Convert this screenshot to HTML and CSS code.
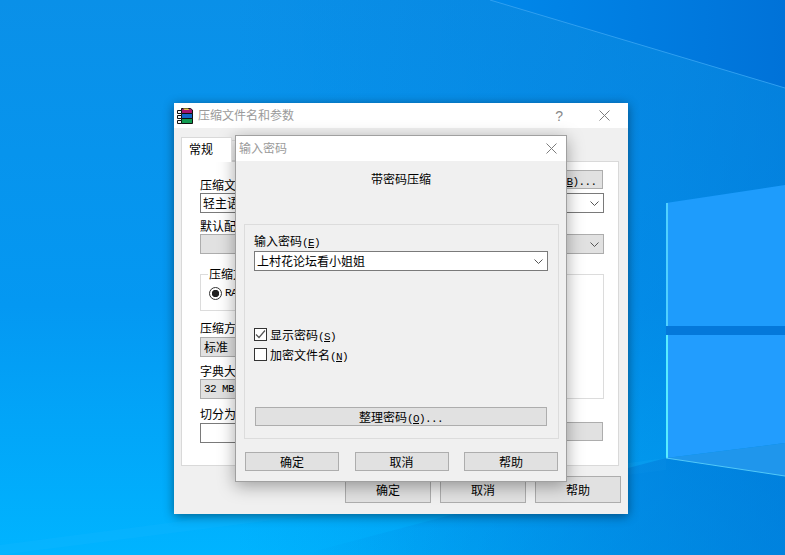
FILE: index.html
```html
<!DOCTYPE html>
<html lang="zh-CN">
<head>
  <meta charset="UTF-8">
  <title>压缩文件名和参数</title>
  <link rel="stylesheet" href="styles.css">
</head>
<body>
  <svg width="0" height="0" class="defs">
    <symbol id="close" viewBox="0 0 11 11"><path d="M.5.5l10 10M10.5.5l-10 10" fill="none" stroke="currentColor"/></symbol>
    <symbol id="chevron" viewBox="0 0 9 5"><path d="M.5.5l4 4 4-4" fill="none" stroke="#555"/></symbol>
  </svg>

  <div class="desktop">
    <!-- wallpaper -->
    <svg class="wallpaper" width="785" height="555" viewBox="0 0 785 555">
      <defs>
        <linearGradient id="base" x1="0" y1="0" x2="0" y2="1">
          <stop offset="0" stop-color="#0a90e8"/>
          <stop offset="0.55" stop-color="#0498f2"/>
          <stop offset="1" stop-color="#00b4ff"/>
        </linearGradient>
        <linearGradient id="shade" x1="0" y1="0" x2="1" y2="0">
          <stop offset="0.3" stop-color="#0070d0" stop-opacity="0"/>
          <stop offset="0.85" stop-color="#0070d0" stop-opacity="0.35"/>
          <stop offset="1" stop-color="#0070d0" stop-opacity="0.5"/>
        </linearGradient>
        <linearGradient id="sky" x1="0" y1="0" x2="1" y2="0">
          <stop offset="0" stop-color="#0088ea"/>
          <stop offset="1" stop-color="#0072d8"/>
        </linearGradient>
        <linearGradient id="floor" x1="0" y1="0" x2="1" y2="0">
          <stop offset="0" stop-color="#0078d8" stop-opacity="0"/>
          <stop offset="0.75" stop-color="#0078d8" stop-opacity="0.5"/>
          <stop offset="1" stop-color="#0078d8" stop-opacity="0.6"/>
        </linearGradient>
      </defs>
      <rect width="785" height="555" fill="url(#base)"/>
      <rect width="785" height="555" fill="url(#shade)"/>
      <polygon points="490,0 785,88 785,0" fill="url(#sky)"/>
      <line x1="490" y1="0" x2="785" y2="88" stroke="#2f9ff0"/>
      <polygon points="0,545 666,458 666,470 0,555" fill="#30c0ff" opacity="0.12"/>
      <polygon points="300,555 666,458 785,476 785,555" fill="url(#floor)"/>
      <polygon points="666,203 785,185 785,326 666,326" fill="#1e9cfc"/>
      <polygon points="666,335 785,335 785,443 666,458" fill="#229dfe"/>
      <polygon points="666,458 785,443 785,476" fill="#1f96ec"/>
      <rect x="666" y="326" width="119" height="9" fill="#0478da"/>
      <rect x="666" y="203" width="2" height="123" fill="#4fd0ff"/>
      <rect x="666" y="335" width="2" height="123" fill="#58ecff"/>
      <line x1="666" y1="458" x2="785" y2="476" stroke="#52c8f8"/>
    </svg>

    <!-- main dialog -->
    <div class="window window-back">
      <div class="titlebar">
        <svg class="app-icon" width="16" height="16" viewBox="0 0 16 16">
          <path d="M4.500.5h9l2 1.500v3.500h-11z" fill="#a3136e" stroke="#111"/>
          <path d="M6 .5h5l1.500 1.500H7.500z" fill="#e6c84a"/>
          <path d="M4.500 5.500h11v5h-11z" fill="#1566c8" stroke="#111"/>
          <path d="M4.500 10.500h11v5h-11z" fill="#119a50" stroke="#111"/>
          <path d="M.5 2.500h4v3h-4zM.5 7.500h4v3h-4zM.5 12.500h4v3h-4z" fill="#f4f4f4" stroke="#111"/>
        </svg>
        <span class="title title-back">压缩文件名和参数</span>
        <span class="help-mark">?</span>
        <svg class="close close-back"><use href="#close"/></svg>
      </div>
      <div class="window-body">
        <div class="tabs">
          <div class="tab active">常规</div>
          <div class="tab"></div>
        </div>
        <div class="panel">
          <div class="name-row">
            <span class="label">压缩文件名<span class="lat">(<u>A</u>)</span></span>
            <button class="btn browse">浏览<span class="lat">(<u>B</u>)...</span></button>
          </div>
          <div class="combo"><span>轻主语<span class="lat">.rar</span></span><svg class="chev"><use href="#chevron"/></svg></div>
          <div class="label label-gap">默认配置</div>
          <div class="combo off"><span></span><svg class="chev"><use href="#chevron"/></svg></div>

          <div class="columns">
            <div class="col-left">
              <fieldset class="group">
                <legend>压缩文件格式</legend>
                <div class="radio-row"><span class="radio"></span><span class="lat">RAR</span></div>
              </fieldset>
              <div class="label field-first">压缩方式<span class="lat">(<u>C</u>)</span></div>
              <div class="combo off"><span>标准</span></div>
              <div class="label label-gap-s">字典大小<span class="lat">(<u>I</u>)</span></div>
              <div class="combo off"><span class="lat">32 MB</span></div>
              <div class="label split-label">切分为分卷<span class="lat">(<u>V</u>)</span></div>
              <div class="combo"><span></span></div>
            </div>
            <div class="col-right">
              <div class="options"></div>
              <button class="btn set-pass"></button>
            </div>
          </div>
        </div>
        <div class="actions">
          <button class="btn big">确定</button>
          <button class="btn big">取消</button>
          <button class="btn big">帮助</button>
        </div>
      </div>
    </div>

    <!-- password dialog -->
    <div class="window window-front">
      <div class="titlebar">
        <span class="title title-front">输入密码</span>
        <svg class="close close-front"><use href="#close"/></svg>
      </div>
      <div class="front-body">
        <div class="heading">带密码压缩</div>
        <div class="pass-group">
          <div class="label">输入密码<span class="lat">(<u>E</u>)</span></div>
          <div class="combo pass-input"><span>上村花论坛看小姐姐</span><svg class="chev"><use href="#chevron"/></svg></div>
          <div class="check-row first-check">
            <span class="check">
              <svg width="11" height="11" viewBox="0 0 11 11"><path d="M1 5.500l3 3 6-7" fill="none" stroke="#555" stroke-width="1.200"/></svg>
            </span>
            <span>显示密码<span class="lat">(<u>S</u>)</span></span>
          </div>
          <div class="check-row">
            <span class="check"></span>
            <span>加密文件名<span class="lat">(<u>N</u>)</span></span>
          </div>
          <button class="btn organize">整理密码<span class="lat">(<u>O</u>)...</span></button>
        </div>
        <div class="front-actions">
          <button class="btn small">确定</button>
          <button class="btn small">取消</button>
          <button class="btn small">帮助</button>
        </div>
      </div>
    </div>
  </div>
</body>
</html>
```

FILE: styles.css
```css
/* page + wallpaper */
body {
  margin: 0;
  font-family: "Noto Sans CJK SC", "Liberation Sans", sans-serif;
  font-size: 12px;
  color: #000;
}
.defs {
  position: absolute;
}
.desktop {
  position: relative;
  width: 785px;
  height: 555px;
  overflow: hidden;
}
.wallpaper {
  position: absolute;
  left: 0;
  top: 0;
}

/* windows */
.window {
  position: absolute;
  box-sizing: border-box;
  background: #f0f0f0;
}
.window-back {
  left: 174px;
  top: 103px;
  width: 454px;
  height: 411px;
  box-shadow: 0 2px 10px rgba(0, 0, 0, 0.45);
}
.window-front {
  left: 235px;
  top: 135px;
  width: 332px;
  height: 347px;
  border: 1px solid #a0a0a0;
  box-shadow: 0 4px 16px rgba(0, 0, 0, 0.35);
}
.titlebar {
  display: flex;
  align-items: center;
  height: 25px;
  background: #fff;
  color: #9a9a9a;
}
.app-icon {
  margin-left: 3px;
  flex: none;
}
.title {
  flex: 1;
  padding-bottom: 2px;
}
.title-back {
  margin-left: 5px;
}
.title-front {
  margin-left: 3px;
}
.help-mark {
  font-family: "Liberation Sans", sans-serif;
  font-size: 14px;
  color: #888;
  margin-right: 36px;
}
.close {
  width: 11px;
  height: 11px;
  color: #7d7d7d;
}
.close-back {
  margin-right: 18px;
}
.close-front {
  margin-right: 9px;
  margin-bottom: 1px;
}

/* back window body */
.window-body {
  padding: 9px 7px 0;
}
.tabs {
  display: flex;
  height: 24px;
}
.tab {
  box-sizing: border-box;
  width: 51px;
  height: 21px;
  margin-top: 3px;
  border: 1px solid #d9d9d9;
  border-left: 0;
}
.tab.active {
  position: relative;
  z-index: 1;
  height: 25px;
  margin-top: 0;
  padding-left: 7px;
  line-height: 22px;
  background: #fff;
  border-left: 1px solid #d9d9d9;
  border-bottom: 0;
}
.panel {
  box-sizing: border-box;
  width: 438px;
  height: 305px;
  padding: 8px 14px 0 18px;
  background: #fff;
  border: 1px solid #d9d9d9;
}
.name-row {
  display: flex;
  justify-content: space-between;
  align-items: flex-end;
  height: 23px;
}
.label {
  height: 16px;
  line-height: 15px;
  white-space: nowrap;
}
.label-gap {
  margin-top: 5px;
}
.label-gap-s {
  margin-top: 6px;
}
.field-first {
  margin-top: 9px;
  margin-bottom: 1px;
}
.split-label {
  margin-top: 7px;
  margin-bottom: 1px;
}
/* latin text in the dialogs is 6px per letter */
.lat {
  font-family: "Liberation Mono", monospace;
  font-size: 11px;
  line-height: 1;
  letter-spacing: -0.6px;
}
.lat u {
  text-underline-offset: 1px;
}

/* controls */
.btn {
  box-sizing: border-box;
  margin: 0;
  padding: 0;
  font: inherit;
  color: #000;
  background: #e1e1e1;
  border: 1px solid #adadad;
  border-radius: 0;
}
.browse {
  align-self: flex-start;
  width: 73px;
  height: 19px;
  margin-right: 1px;
  line-height: 16px;
}
.combo {
  box-sizing: border-box;
  display: flex;
  justify-content: space-between;
  align-items: center;
  height: 20px;
  padding: 0 4px 0 2px;
  line-height: 18px;
  background: #fff;
  border: 1px solid #7a7a7a;
}
.combo.off {
  background: #e1e1e1;
  border-color: #adadad;
  padding-left: 3px;
}
.chev {
  width: 9px;
  height: 5px;
  flex: none;
}
.columns {
  display: grid;
  grid-template-columns: 190px 204px;
  column-gap: 10px;
  margin-top: 12px;
}
.group {
  box-sizing: border-box;
  height: 45px;
  margin: 0;
  padding: 0 0 0 8px;
  border: 1px solid #dcdcdc;
}
.group legend {
  padding: 0 1px;
  line-height: 16px;
  margin-left: -1px;
}
.radio-row {
  display: flex;
  align-items: center;
  gap: 3px;
  margin-top: 5px;
  height: 13px;
}
.radio {
  box-sizing: border-box;
  width: 13px;
  height: 13px;
  border: 1px solid #333;
  border-radius: 50%;
  background: radial-gradient(circle, #222 0, #222 3.4px, #fff 4px);
}
.options {
  box-sizing: border-box;
  height: 125px;
  margin-top: 8px;
  border: 1px solid #dcdcdc;
}
.set-pass {
  display: block;
  width: 203px;
  height: 19px;
  margin-top: 23px;
}
.actions {
  display: flex;
  justify-content: flex-end;
  gap: 9px;
  margin-top: 10px;
}
.big {
  width: 86px;
  height: 27px;
}

/* password dialog body */
.heading {
  height: 16px;
  margin-top: 10px;
  line-height: 16px;
  text-align: center;
}
.pass-group {
  box-sizing: border-box;
  height: 215px;
  margin: 37px 7px 0 8px;
  padding: 8px 0 0 9px;
  border: 1px solid #dcdcdc;
}
.pass-input {
  width: 294px;
  margin-top: 2px;
}
.check-row {
  display: flex;
  align-items: center;
  gap: 3px;
  height: 19px;
  margin-top: 1px;
}
.first-check {
  margin-top: 54px;
}
.check {
  box-sizing: border-box;
  display: flex;
  align-items: center;
  justify-content: center;
  width: 13px;
  height: 13px;
  background: #fff;
  border: 1px solid #333;
}
.organize {
  display: block;
  width: 292px;
  height: 19px;
  margin: 43px 0 0 1px;
}
.front-actions {
  display: flex;
  justify-content: space-between;
  margin: 13px 8px 0 9px;
}
.small {
  width: 94px;
  height: 19px;
}
```
